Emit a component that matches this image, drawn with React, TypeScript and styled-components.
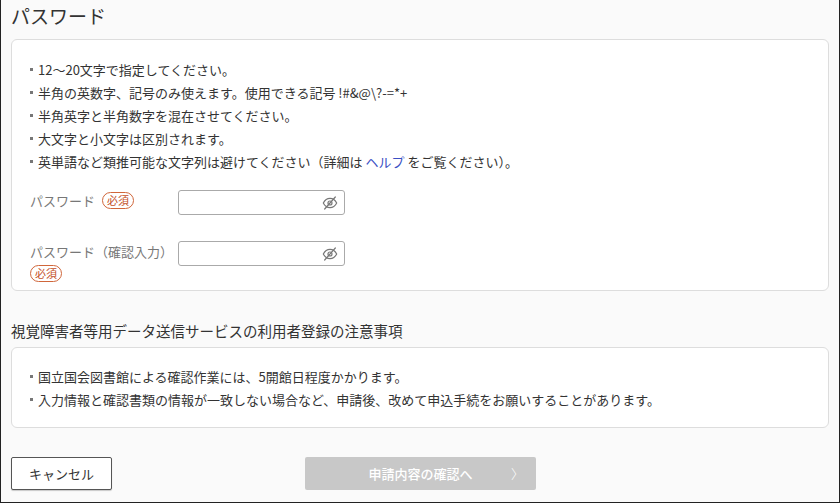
import React from "react";
import styled, { createGlobalStyle } from "styled-components";

const Global = createGlobalStyle`
  html, body { margin: 0; padding: 0; }
  body { font-family: "Noto Sans CJK JP", "Noto Sans", sans-serif; color: #333; }
  * { box-sizing: border-box; }
`;

const Frame = styled.div`
  width: 840px; height: 503px; border: 1px solid #222; border-top: none;
  background: #fafafa; padding: 0 10px 0 10px; overflow: hidden;
`;
const Title = styled.h1`
  margin: 0; padding-top: 3px; height: 39px; font-size: 19px; font-weight: 400; line-height: 26px; color: #333;
`;
const Card = styled.div<{ $pad: string; $h: number }>`
  background: #fff; border: 1px solid #ddd; border-radius: 6px; padding: ${p => p.$pad}; height: ${p => p.$h}px;
`;
const List = styled.ul`
  list-style: none; margin: 0; padding: 0;
`;
const Item = styled.li`
  font-size: 13px; line-height: 23px; height: 23px; padding-left: 8px; position: relative; color: #333;
  &::before { content: ""; position: absolute; left: 0; top: 10px; width: 3px; height: 3px; background: #777; }
`;
const Link = styled.a` color: #3b4fc4; text-decoration: none; `;
const Form = styled.div` display: flex; flex-direction: column; gap: 26px; margin-top: 17px; `;
const Row = styled.div` display: flex; align-items: flex-start; `;
const Label = styled.div`
  width: 148px; font-size: 13px; line-height: 22px; color: #777;
`;
const Req = styled.span<{ $first?: boolean }>`
  display: inline-block; font-size: 11px; line-height: 15px; padding: 0 4px; border: 1px solid #d0663a;
  color: #c4501f; border-radius: 9px; margin-left: ${p => (p.$first ? 0 : 4)}px; vertical-align: 1px;
`;
const Input = styled.div`
  width: 167px; height: 25px; border: 1px solid #aaa; border-radius: 3px; background: #fff;
  display: flex; align-items: center; justify-content: flex-end; padding-right: 5px;
`;
const Section = styled.h2`
  margin: 30px 0 0; font-size: 14.5px; font-weight: 400; line-height: 20px; height: 26px; color: #333;
`;
const Buttons = styled.div` display: flex; align-items: center; margin-top: 29px; `;
const Cancel = styled.button`
  width: 101px; height: 33px; background: #fff; border: 1px solid #555; border-radius: 2px;
  font: 13px "Noto Sans CJK JP", sans-serif; color: #333; box-shadow: 0 1px 1px rgba(0,0,0,.2);
`;
const Submit = styled.button`
  margin-left: 193px; width: 231px; height: 33px; background: #c8c8c8; border: none; border-radius: 2px;
  color: #fff; font: 500 13px "Noto Sans CJK JP", sans-serif; position: relative;
  span { position: absolute; right: 12px; top: 7px; font-weight: 300; }
`;

const Eye = () => (
  <svg width="18" height="16" viewBox="0 0 24 24" fill="none" stroke="#777" strokeWidth="1.8" strokeLinecap="round">
    <path d="M2 12s3.5-7 10-7 10 7 10 7-3.5 7-10 7S2 12 2 12z" />
    <circle cx="12" cy="12" r="3" />
    <path d="M4 21L20 3" />
  </svg>
);

export default function App() {
  return (
    <Frame>
      <Global />
      <Title>パスワード</Title>
      <Card $pad="18px 18px 0 18px" $h={252}>
        <List>
          <Item>12〜20文字で指定してください。</Item>
          <Item>半角の英数字、記号のみ使えます。使用できる記号 !#&amp;@\?-=*+</Item>
          <Item>半角英字と半角数字を混在させてください。</Item>
          <Item>大文字と小文字は区別されます。</Item>
          <Item>英単語など類推可能な文字列は避けてください（詳細は <Link href="#">ヘルプ</Link> をご覧ください）。</Item>
        </List>
        <Form>
          <Row>
            <Label>パスワード <Req>必須</Req></Label>
            <Input><Eye /></Input>
          </Row>
          <Row>
            <Label>パスワード（確認入力）<br /><Req $first>必須</Req></Label>
            <Input><Eye /></Input>
          </Row>
        </Form>
      </Card>
      <Section>視覚障害者等用データ送信サービスの利用者登録の注意事項</Section>
      <Card $pad="17px 18px 0 18px" $h={81}>
        <List>
          <Item>国立国会図書館による確認作業には、5開館日程度かかります。</Item>
          <Item>入力情報と確認書類の情報が一致しない場合など、申請後、改めて申込手続をお願いすることがあります。</Item>
        </List>
      </Card>
      <Buttons>
        <Cancel>キャンセル</Cancel>
        <Submit>申請内容の確認へ<span>〉</span></Submit>
      </Buttons>
    </Frame>
  );
}
